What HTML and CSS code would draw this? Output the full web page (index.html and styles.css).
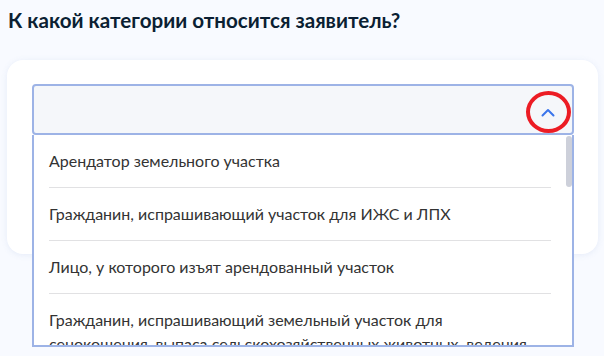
FILE: index.html
```html
<!DOCTYPE html>
<html lang="ru">
<head>
    <meta charset="UTF-8">
    <meta name="viewport" content="width=device-width, initial-scale=1.0">
    <title>Категория заявителя</title>
    <link rel="stylesheet" href="styles.css">
</head>
<body>
    <div class="page">
        <h2 class="question">К какой категории относится заявитель?</h2>

        <div class="card">
            <div class="select">
                <div class="select-field">
                    <span class="select-value"></span>
                    <span class="select-arrow">
                        <svg width="14" height="9" viewBox="0 0 14 9">
                            <path d="M1.5 7.5 L7 2 L12.5 7.5" fill="none" stroke="#3a75eb" stroke-width="2" stroke-linecap="round" stroke-linejoin="round"/>
                        </svg>
                    </span>
                    <span class="mark"></span>
                </div>

                <div class="dropdown">
                    <ul class="options">
                        <li>Арендатор земельного участка</li>
                        <li>Гражданин, испрашивающий участок для ИЖС и ЛПХ</li>
                        <li>Лицо, у которого изъят арендованный участок</li>
                        <li>Гражданин, испрашивающий земельный участок для сенокошения, выпаса сельскохозяйственных животных, ведения огородничества</li>
                    </ul>
                    <div class="scroll-thumb"></div>
                </div>
            </div>
        </div>
    </div>
</body>
</html>
```

FILE: styles.css
```css
html, body {
    margin: 0;
    min-height: 100%;
    background-color: #f8faff;
}
body {
    font-family: Lato, "Noto Sans", sans-serif;
    color: #0b1f33;
}
.page {
    min-height: 356px;
    padding: 0 6px 0 7px;
}
.question {
    margin: 0;
    padding: 7px 0 0 1px;
    height: 60px;
    box-sizing: border-box;
    font-size: 20.6px;
    line-height: 26px;
    font-weight: 700;
}
.card {
    background: #fff;
    border-radius: 16px;
    box-shadow: 0 1px 6px rgba(100, 130, 200, 0.12);
    height: 194px;
    padding: 24px 24px 0 25px;
    box-sizing: border-box;
}
.select {
    position: relative;
}
.select-field {
    position: relative;
    height: 51px;
    box-sizing: border-box;
    border: 2px solid #9db3e6;
    border-radius: 4px;
    background: #f5f7fa;
    display: flex;
    align-items: center;
    justify-content: flex-end;
    padding-right: 17px;
}
.select-arrow {
    display: flex;
    margin-top: 6px;
}
.mark {
    position: absolute;
    right: 1px;
    top: 5px;
    width: 37px;
    height: 34px;
    border: 4px solid #ec1c24;
    border-radius: 50%;
}
.dropdown {
    position: absolute;
    left: 0;
    right: 0;
    top: 51px;
    height: 212px;
    box-sizing: border-box;
    border: 2px solid #9db3e6;
    border-top: none;
    background: #fff;
    overflow: hidden;
    z-index: 2;
}
.options {
    list-style: none;
    margin: 0;
    padding: 0 21px 0 15px;
}
.options li {
    padding: 14px 12px 14px 0;
    line-height: 24px;
    font-size: 16px;
    color: #333;
    border-bottom: 1px solid #e1e1e3;
}
.scroll-thumb {
    position: absolute;
    right: 0;
    top: 1px;
    width: 6px;
    height: 51px;
    border-radius: 3px;
    background: #cdd0da;
}
```
